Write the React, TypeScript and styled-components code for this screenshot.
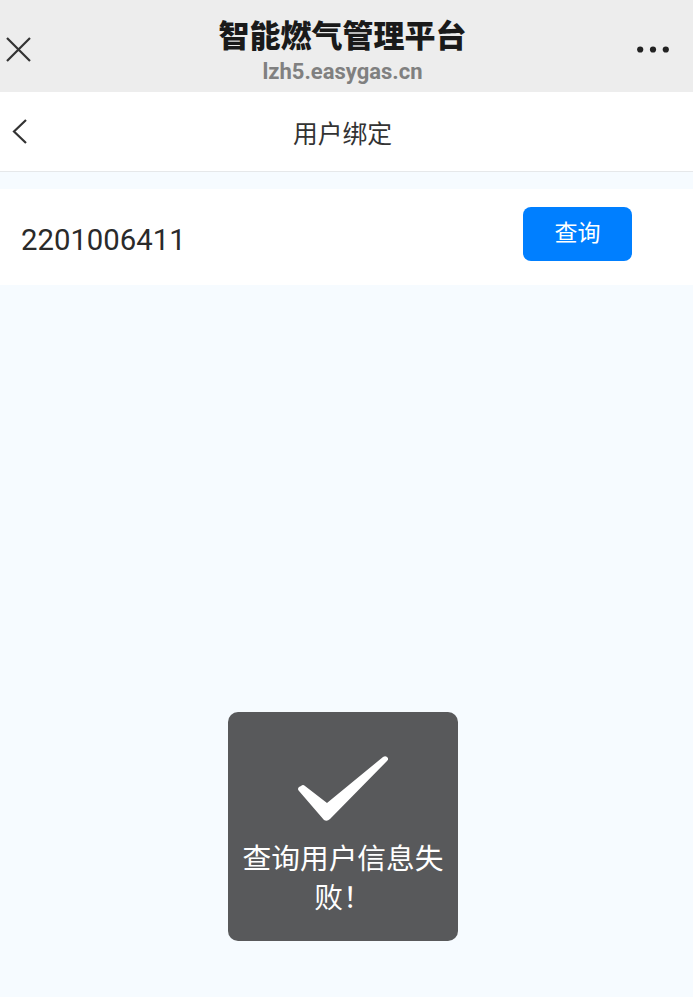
import React from "react";
import styled, { createGlobalStyle } from "styled-components";

const GlobalStyle = createGlobalStyle`
	html, body {
		margin: 0;
		padding: 0;
		background: #f6fbff;
	}
	body {
		font-family: "Noto Sans", "Noto Sans CJK SC", sans-serif;
	}
`;

const Page = styled.div`
	position: relative;
	width: 693px;
	height: 997px;
	overflow: hidden;
	background: #f6fbff;
`;

const BrowserBar = styled.header`
	height: 92px;
	box-sizing: border-box;
	background: #ededed;
	display: grid;
	grid-template-columns: 76px 1fr 84px;
`;

const BarSide = styled.div<{ $end?: boolean }>`
	display: flex;
	align-items: center;
	justify-content: ${props => props.$end ? "flex-end" : "flex-start"};
	padding: 7px ${props => props.$end ? "24px" : "0"} 0 ${props => props.$end ? "0" : "6px"};
`;

const BarTitles = styled.div`
	display: flex;
	flex-direction: column;
	align-items: center;
	padding-top: 14px;
`;

const SiteTitle = styled.div`
	font-family: "Noto Sans CJK SC", sans-serif;
	font-size: 31px;
	font-weight: 900;
	line-height: 40px;
	color: #1a1a1a;
`;

const SiteUrl = styled.div`
	margin-top: 3px;
	font-family: "Roboto", "Noto Sans", sans-serif;
	font-size: 22px;
	font-weight: 700;
	line-height: 30px;
	color: #808080;
`;

const NavBar = styled.nav`
	height: 80px;
	box-sizing: border-box;
	background: #fff;
	border-bottom: 1px solid #e6e8ea;
	display: grid;
	grid-template-columns: 76px 1fr 84px;
	align-items: center;
`;

const BackButton = styled.div`
	display: flex;
	align-items: center;
	padding-left: 12px;
`;

const NavTitle = styled.div`
	font-family: "Noto Sans CJK SC", sans-serif;
	font-size: 24.8px;
	line-height: 34px;
	text-align: center;
	color: #333;
`;

const SearchRow = styled.section`
	margin-top: 17px;
	height: 96px;
	background: #fff;
	display: flex;
	align-items: flex-start;
	justify-content: space-between;
	padding: 18px 61px 0 21px;
	box-sizing: border-box;
`;

const AccountNo = styled.div`
	font-family: "Roboto", sans-serif;
	font-size: 29.3px;
	line-height: 40px;
	margin-top: 13px;
	color: #2a2a2a;
`;

const QueryButton = styled.button`
	width: 109px;
	height: 54px;
	border: 0;
	border-radius: 8px;
	background: #007fff;
	color: #fff;
	font-family: "Noto Sans CJK SC", sans-serif;
	font-size: 23px;
	padding: 0 0 7px;
`;

const Toast = styled.div`
	position: absolute;
	left: 228px;
	top: 712px;
	width: 230px;
	height: 229px;
	box-sizing: border-box;
	padding: 44px 14px 0;
	border-radius: 10px;
	background: #58595b;
	display: flex;
	flex-direction: column;
	align-items: center;
`;

const ToastText = styled.div`
	margin-top: 16px;
	font-family: "Noto Sans CJK SC", sans-serif;
	font-size: 28.7px;
	line-height: 38.5px;
	text-align: center;
	color: #fff;
`;

const App = () => (
	<Page>
		<GlobalStyle />
		<BrowserBar>
			<BarSide>
				<svg width="25" height="25" viewBox="0 0 25 25" fill="none" stroke="#333" strokeWidth="2.2">
					<path d="M1 1 L24 24 M24 1 L1 24" />
				</svg>
			</BarSide>
			<BarTitles>
				<SiteTitle>智能燃气管理平台</SiteTitle>
				<SiteUrl>lzh5.easygas.cn</SiteUrl>
			</BarTitles>
			<BarSide $end>
				<svg width="32" height="7" viewBox="0 0 32 7" fill="#222">
					<circle cx="3.2" cy="3.5" r="3.1" />
					<circle cx="16" cy="3.5" r="3.1" />
					<circle cx="28.8" cy="3.5" r="3.1" />
				</svg>
			</BarSide>
		</BrowserBar>
		<NavBar>
			<BackButton>
				<svg width="15" height="25" viewBox="0 0 15 25" fill="none" stroke="#333" strokeWidth="2.2">
					<path d="M14 1 L2 12.5 L14 24" />
				</svg>
			</BackButton>
			<NavTitle>用户绑定</NavTitle>
		</NavBar>
		<SearchRow>
			<AccountNo>2201006411</AccountNo>
			<QueryButton>查询</QueryButton>
		</SearchRow>
		<Toast>
			<svg width="90" height="66" viewBox="0 0 90 66" fill="#fff">
				<path d="M1 35 Q-1 33 1 31 L3 30 Q5 28 7 30 L29 47 L85 1 Q88 -1 90 2 Q91 3 89 5 L32 63 Q29 66 26 64 Z" />
			</svg>
			<ToastText>查询用户信息失败！</ToastText>
		</Toast>
	</Page>
);

export default App;
